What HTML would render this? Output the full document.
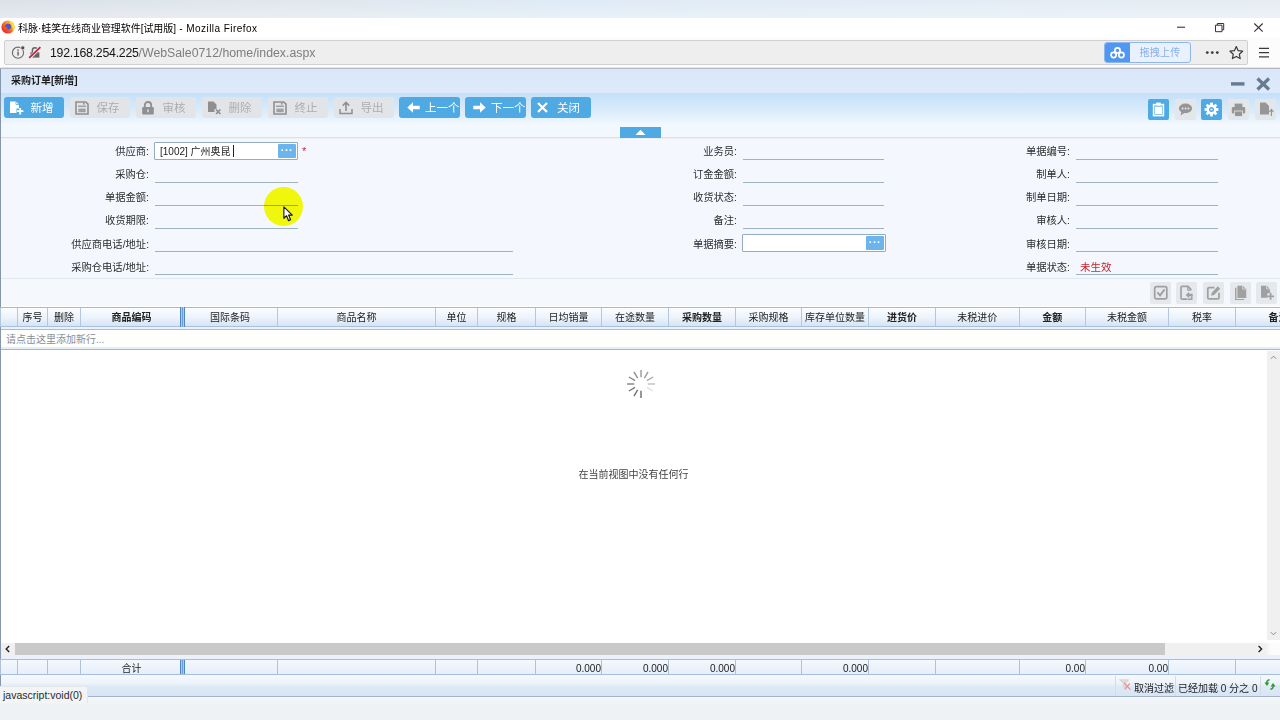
<!DOCTYPE html>
<html lang="zh-CN">
<head>
<meta charset="utf-8">
<title>科脉·蛙笑在线商业管理软件[试用版]</title>
<style>
*{box-sizing:border-box;margin:0;padding:0}
html,body{width:1280px;height:720px;overflow:hidden;background:#eef0f3}
body{position:relative;font-family:"Liberation Sans","Noto Sans CJK SC",sans-serif;font-size:10px;color:#222}
.abs{position:absolute}
svg{position:absolute;overflow:visible}
#topband{left:0;top:0;width:1280px;height:18px;background:linear-gradient(rgba(255,255,255,0),rgba(255,255,255,.3)),linear-gradient(90deg,#dbe1e9 0%,#e0e7ed 22%,#deeaf5 42%,#e2ecf6 70%,#e5ecf4 100%)}
#titlebar{left:0;top:18px;width:1280px;height:20px;background:#fff}
#titletext{left:18px;top:22px;font-size:10px;letter-spacing:-.05px;line-height:14px;color:#000;white-space:nowrap}
#navbar{left:0;top:38px;width:1280px;height:31px;background:#fcfcfc;border-bottom:1px solid #b4bac3;box-shadow:inset 0 -1px 0 #e3e5e8}
#urlbox{left:4px;top:40px;width:1244px;height:25px;background:#eeeeef;border:1px solid #d0d0d2;border-radius:2px}
#urltext{left:50px;top:46px;font-size:12.3px;line-height:15px;color:#7d7d7d;white-space:nowrap}
#urltext b{font-weight:normal;color:#151515;letter-spacing:-.25px}
#upl{left:1104px;top:42px;width:87px;height:21px;border:1px solid #8db6ec;border-radius:3px;background:#e8f1fd;overflow:hidden}
#upl i{position:absolute;left:0;top:0;width:25px;height:21px;background:#4f97f1}
#upl span{position:absolute;left:25px;top:0;width:60px;text-align:center;font-size:10px;line-height:19px;color:#86aee9;letter-spacing:.3px}
#apphead{left:0;top:69px;width:1280px;height:24px;background:linear-gradient(#d9e7f9,#deeafa)}
#apptitle{left:11px;top:74px;font-size:10px;font-weight:bold;line-height:14px;color:#1c1c1c;white-space:nowrap}
#toolbar{left:0;top:93px;width:1280px;height:30px;background:linear-gradient(#c4e0f9 0%,#d8eafb 55%,#eef6fe 100%)}
#subbar{left:0;top:123px;width:1280px;height:15px;background:#f3f8fe;border-bottom:1px solid #d9e2ec}
#leftedge{left:0;top:69px;width:1px;height:617px;background:#8797ab}
.btn{position:absolute;top:97px;height:21px;width:60px;border-radius:3px;font-size:11.5px;line-height:21px;white-space:nowrap}
.btn.blue{background:#4fa9e3;color:#fff}
.btn.gray{background:#e2e5e8;color:#adadad}
.btn span{position:absolute;left:26.5px;top:1px}
.ib{position:absolute;width:21px;height:21px;border-radius:2px}
.ib.blue{background:#4fa9e3}
.ib.gray{background:#e4e7ea}
#tab{left:620px;top:127px;width:41px;height:11px;background:#4fa9e3}
#form{left:1px;top:139px;width:1279px;height:140px;background:#f4f8fe;border-bottom:1px solid #e1e7ef}
#strip{left:1px;top:279px;width:1279px;height:28px;background:#f5f9fe}
.lbl{position:absolute;width:140px;text-align:right;font-size:10.3px;margin-top:1px;line-height:14px;color:#2c2c2c;white-space:nowrap}
.ul{position:absolute;height:1px;background:#9fb2c0}
.box{position:absolute;height:18px;width:144px;background:#fff;border:1px solid #94abc6;border-radius:1px}
.box i{position:absolute;right:1px;top:1px;width:18px;height:14px;background:#6bb5ec;border-radius:1px}
.box i:before{content:"···";position:absolute;left:0;top:0;width:18px;text-align:center;color:#fff;font-style:normal;font-weight:bold;font-size:11px;line-height:13px;letter-spacing:.5px}
.box span{position:absolute;left:5px;top:2px;font-size:10px;line-height:14px;color:#222;white-space:nowrap}
#grid{left:1px;top:306px;width:1279px;height:354px;background:#fff}
#ghead{left:0;top:307px;width:1280px;height:20px;border-top:1px solid #a7b8cd;border-bottom:1px solid #a9c0dc;background:linear-gradient(#fbfdff 0%,#eef4fb 50%,#d6e4f5 100%);overflow:hidden}
.hc{position:absolute;top:0;height:19px;border-left:1px solid #b3c8e0;text-align:center;font-size:10px;line-height:20px;color:#222;white-space:nowrap;overflow:hidden}
.hc.b{font-weight:bold}
#gband{left:1px;top:327px;width:1279px;height:3px;background:#e9f1fa;border-bottom:1px solid #a6bdd8}
#addrow{left:1px;top:330px;width:1279px;height:20px;background:#fefefd;border-bottom:1px solid #a3b8d0;box-shadow:inset 0 -2px 1px #e4eef9}
#addrow span{position:absolute;left:5px;top:3px;font-size:10px;line-height:14px;color:#8a8f96}
.split{left:180px;width:5px;background:#6f9fd6;border-left:1px solid #4f86c6;border-right:1px solid #4f86c6;box-shadow:inset 1px 0 0 #a9c8ec, inset -1px 0 0 #a9c8ec}
#gfoot{left:0;top:659px;width:1280px;height:16px;border-top:1px solid #a4bfdd;border-bottom:1px solid #a4bfdd;background:linear-gradient(#f4f8fd,#e6eef9);overflow:hidden}
.fc{position:absolute;top:0;height:14px;border-left:1px solid #afc1d6;font-size:10px;line-height:17px;color:#222;white-space:nowrap;overflow:hidden}
#hscroll{left:1px;top:643px;width:1266px;height:12px;background:#f0f0f0}
#hthumb{left:15px;top:643px;width:1150px;height:12px;background:#c9c9c9}
#vscroll{left:1267px;top:351px;width:13px;height:289px;background:#f0f0f0}
#corner{left:1265px;top:643px;width:15px;height:12px;background:linear-gradient(90deg,#f0f0f0,#fcfcfc 40%)}
#gap{left:1px;top:655px;width:1279px;height:4px;background:#eaf1fa}
#pager{left:1px;top:675px;width:1279px;height:22px;background:linear-gradient(#f6f9fd 0%,#eef4fb 38%,#dee9f6 55%,#dae5f4 100%);border-bottom:1px solid #9fb3ca}
#below{left:0;top:697px;width:1280px;height:23px;background:linear-gradient(#f4f7fa,#eff2f5 40%,#eff2f5)}
#status{left:0;top:686px;width:88px;height:17px;background:#f3f4f6;border-top:1px solid #e4e6ea;border-right:1px solid #e4e6ea;font-size:10.5px;line-height:16px;color:#2a2a2a;padding-left:3px;white-space:nowrap}
.pt{position:absolute;top:681.5px;font-size:10px;line-height:14px;color:#222;white-space:nowrap}
.psep{position:absolute;top:676px;width:1px;height:20px;background:#d3dce8}
#empty{left:578.5px;top:468px;font-size:10px;line-height:14px;color:#444;white-space:nowrap}
</style>
</head>
<body>
<div id="topband" class="abs"></div>
<div id="titlebar" class="abs"></div>
<svg style="left:1px;top:20px" width="14" height="14" viewBox="0 0 14 14">
  <defs><linearGradient id="ffg" x1="1" y1="0" x2="0" y2="1"><stop offset="0" stop-color="#ffd62a"/><stop offset=".35" stop-color="#ff9a1f"/><stop offset=".7" stop-color="#f2402a"/><stop offset="1" stop-color="#d8204a"/></linearGradient></defs>
  <circle cx="7" cy="7" r="6.6" fill="url(#ffg)"/>
  <path d="M7.6 0.6 C10.8 1 13.4 3.6 13.5 7 C13.5 9 12.6 10.6 11.4 11.8 C12.2 9.6 11.8 6.4 10.2 4.6 C9.4 3.4 8.6 2 7.6 0.6Z" fill="#ffe03a"/>
  <circle cx="7.1" cy="6.6" r="2.9" fill="#2b5fd0"/>
  <path d="M5 4.8 C6.2 3.6 8.6 3.8 9.6 5.4 C8.4 5 7.6 5.4 7.4 6.4 C6.2 6.6 5.4 5.8 5 4.8Z" fill="#7a3fd0"/>
  <path d="M2.6 5.4 C3.6 7.4 5.4 7.8 6.8 7.2 C6.6 8.8 5 9.8 3.4 8.8 C2.6 7.8 2.4 6.4 2.6 5.4Z" fill="#f5621f"/>
</svg>
<div id="titletext" class="abs">科脉·蛙笑在线商业管理软件[试用版]<span style="letter-spacing:.45px"> - Mozilla Firefox</span></div>
<svg style="left:1170px;top:19px" width="100" height="18" viewBox="0 0 100 18">
  <path d="M7 8.2 H15" stroke="#333" stroke-width="1.1" fill="none"/>
  <path d="M45.5 6.2 H52 V12.7 H45.5 Z M47.3 6.2 V4.5 H53.7 V10.8 H52" stroke="#333" stroke-width="1" fill="none"/>
  <path d="M84.3 4.5 L92.7 12.7 M92.7 4.5 L84.3 12.7" stroke="#333" stroke-width="1.1" fill="none"/>
</svg>
<div id="navbar" class="abs"></div>
<div id="urlbox" class="abs"></div>
<svg style="left:10px;top:44px" width="34" height="18" viewBox="0 0 34 18">
  <circle cx="8" cy="8.7" r="5.6" fill="none" stroke="#6b6b6b" stroke-width="1.1"/>
  <rect x="7.4" y="7.6" width="1.3" height="4" fill="#555"/>
  <rect x="7.4" y="5.4" width="1.3" height="1.4" fill="#555"/>
  <circle cx="12.8" cy="3.9" r="2.1" fill="#4e4e4e" stroke="#eeeeef" stroke-width="0.9"/>
  <path d="M20.4 13.6 V8.4 H29.4 V13.6 Z" fill="#666"/>
  <path d="M22.4 9 V6.2 A2.5 2.5 0 0 1 27.4 6.2 V9" fill="none" stroke="#666" stroke-width="1.5"/>
  <path d="M19 14.5 L30.5 3" stroke="#eeeeef" stroke-width="3.2" fill="none"/><path d="M19.2 13.9 L30.4 3.1" stroke="#c81e45" stroke-width="1.8" fill="none"/>
</svg>
<div id="urltext" class="abs"><b>192.168.254.225</b>/WebSale0712/home/index.aspx</div>
<div id="upl" class="abs"><i></i><span>拖拽上传</span>
  <svg style="left:4px;top:3px" width="17" height="14" viewBox="0 0 17 14">
    <circle cx="8.5" cy="4.4" r="2.6" fill="none" stroke="#fff" stroke-width="1.7"/>
    <circle cx="4.6" cy="9" r="2.6" fill="none" stroke="#fff" stroke-width="1.7"/>
    <circle cx="12.4" cy="9" r="2.6" fill="none" stroke="#fff" stroke-width="1.7"/>
  </svg>
</div>
<svg style="left:1200px;top:44px" width="76" height="18" viewBox="0 0 76 18">
  <circle cx="7.3" cy="8.6" r="1.4" fill="#3c3c3c"/><circle cx="12.3" cy="8.6" r="1.4" fill="#3c3c3c"/><circle cx="17.3" cy="8.6" r="1.4" fill="#3c3c3c"/>
  <path d="M36.3 2.6 L38.2 6.7 L42.6 7.2 L39.3 10.2 L40.2 14.6 L36.3 12.4 L32.4 14.6 L33.3 10.2 L30 7.2 L34.4 6.7 Z" fill="none" stroke="#3a3a3a" stroke-width="1.2" stroke-linejoin="round"/>
  <path d="M59 4.3 H69 M59 8.6 H69 M59 12.9 H69" stroke="#3a3a3a" stroke-width="1.3" fill="none"/>
</svg>
<div id="apphead" class="abs"></div>
<div id="apptitle" class="abs">采购订单[新增]</div>
<svg style="left:1228px;top:75px" width="46" height="18" viewBox="0 0 46 18">
  <rect x="3" y="7.2" width="13.5" height="3.4" fill="#667a90"/>
  <path d="M29.5 3.5 L41 14.5 M41 3.5 L29.5 14.5" stroke="#667a90" stroke-width="3.2" fill="none"/>
</svg>
<div id="toolbar" class="abs"></div>
<div id="subbar" class="abs"></div>
<div id="tab" class="abs"><svg style="left:15px;top:2px" width="11" height="7" viewBox="0 0 11 7"><path d="M0.5 6 L5.5 0.8 L10.5 6 Z" fill="#fff"/></svg></div>

<div class="btn blue" style="left:4px"><svg style="left:5px;top:4px" width="16" height="14" viewBox="0 0 16 14"><path d="M1 0.5 H7 L10 3.5 V7.5 H7.5 V12 H1 Z" fill="#fff"/><path d="M7 0.5 V3.5 H10" fill="none" stroke="#4fa9e3" stroke-width="0.8"/><path d="M11.2 7 V13.4 M8 10.2 H14.4" stroke="#fff" stroke-width="1.8" fill="none"/></svg><span>新增</span></div>
<div class="btn gray" style="left:70px"><svg style="left:4.5px;top:4px" width="14" height="14" viewBox="0 0 14 14"><path d="M1 1 H10.8 L13 3.2 V13 H1 Z" fill="none" stroke="#8f8f8f" stroke-width="1.6"/><rect x="3.4" y="7.6" width="7.2" height="3.6" fill="#a0a0a0"/><rect x="3" y="4.6" width="8" height="1.2" fill="#8f8f8f"/><rect x="8" y="2" width="1.6" height="1.6" fill="#8f8f8f"/></svg><span>保存</span></div>
<div class="btn gray" style="left:136px"><svg style="left:4.5px;top:4px" width="14" height="14" viewBox="0 0 14 14"><rect x="1.2" y="6" width="11.6" height="7.4" rx="1" fill="#8f8f8f"/><path d="M3.8 6.4 V4.2 A3.2 3.2 0 0 1 10.2 4.2 V6.4" fill="none" stroke="#8f8f8f" stroke-width="1.8"/><rect x="6.3" y="8.4" width="1.4" height="2.8" fill="#e2e5e8"/></svg><span>审核</span></div>
<div class="btn gray" style="left:202px"><svg style="left:5px;top:4px" width="16" height="14" viewBox="0 0 16 14"><path d="M1 0.5 H6.5 L9.5 3.5 V8 H7.5 V11 H1 Z" fill="#8f8f8f"/><path d="M9 8.5 L13.4 13 M13.4 8.5 L9 13" stroke="#8f8f8f" stroke-width="1.7" fill="none"/></svg><span>删除</span></div>
<div class="btn gray" style="left:268px"><svg style="left:4.5px;top:4px" width="14" height="14" viewBox="0 0 14 14"><path d="M1 1 H10.8 L13 3.2 V13 H1 Z" fill="none" stroke="#8f8f8f" stroke-width="1.6"/><rect x="3.4" y="7.6" width="7.2" height="3.6" fill="#a0a0a0"/><rect x="3" y="4.6" width="8" height="1.2" fill="#8f8f8f"/><rect x="8" y="2" width="1.6" height="1.6" fill="#8f8f8f"/></svg><span>终止</span></div>
<div class="btn gray" style="left:334px"><svg style="left:4.5px;top:4px" width="14" height="14" viewBox="0 0 14 14"><path d="M1 8 V12.6 H13 V8" fill="none" stroke="#8f8f8f" stroke-width="1.5"/><path d="M7 10 V1.5 M3.8 4.6 L7 1.3 L10.2 4.6" fill="none" stroke="#8f8f8f" stroke-width="1.6"/></svg><span>导出</span></div>
<div class="btn blue" style="left:399px;width:61px"><svg style="left:8px;top:5px" width="13" height="11" viewBox="0 0 13 11"><path d="M0.3 5.5 L6 0.3 V3.7 H12.7 V7.3 H6 V10.7 Z" fill="#fff"/></svg><span style="left:26px">上一个</span></div>
<div class="btn blue" style="left:465px;width:61px"><svg style="left:8px;top:5px" width="13" height="11" viewBox="0 0 13 11"><path d="M12.7 5.5 L7 0.3 V3.7 H0.3 V7.3 H7 V10.7 Z" fill="#fff"/></svg><span style="left:26px">下一个</span></div>
<div class="btn blue" style="left:531px;width:60px"><svg style="left:6px;top:5px" width="11" height="11" viewBox="0 0 11 11"><path d="M1 1 L10 10 M10 1 L1 10" stroke="#fff" stroke-width="2.2" fill="none"/></svg><span style="left:26px">关闭</span></div>

<div class="ib blue" style="left:1148px;top:99px"><svg style="left:4px;top:3px" width="13" height="15" viewBox="0 0 13 15"><rect x="1.6" y="2.6" width="9.8" height="11" fill="none" stroke="#fff" stroke-width="1.6"/><rect x="4.2" y="0.6" width="4.6" height="3" fill="#fff"/><rect x="3" y="4.6" width="7" height="7.6" fill="#fff"/></svg></div>
<div class="ib gray" style="left:1175px;top:99px"><svg style="left:3px;top:4px" width="15" height="13" viewBox="0 0 15 13"><ellipse cx="7.5" cy="5.4" rx="6.6" ry="4.8" fill="#969696"/><path d="M3.4 8.6 L2.6 12.4 L7 9.6 Z" fill="#969696"/><circle cx="4.6" cy="5.4" r="1" fill="#e4e7ea"/><circle cx="7.5" cy="5.4" r="1" fill="#e4e7ea"/><circle cx="10.4" cy="5.4" r="1" fill="#e4e7ea"/></svg></div>
<div class="ib blue" style="left:1201px;top:99px"><svg style="left:3px;top:3px" width="15" height="15" viewBox="0 0 15 15"><g fill="#fff"><circle cx="7.5" cy="7.5" r="4.9"/><g id="teeth"><rect x="6.1" y="0.6" width="2.8" height="3"/><rect x="6.1" y="11.4" width="2.8" height="3"/><rect x="0.6" y="6.1" width="3" height="2.8"/><rect x="11.4" y="6.1" width="3" height="2.8"/></g><g transform="rotate(45 7.5 7.5)"><rect x="6.1" y="0.6" width="2.8" height="3"/><rect x="6.1" y="11.4" width="2.8" height="3"/><rect x="0.6" y="6.1" width="3" height="2.8"/><rect x="11.4" y="6.1" width="3" height="2.8"/></g></g><circle cx="7.5" cy="7.5" r="2.5" fill="#4fa9e3"/><circle cx="7.5" cy="7.5" r="1.1" fill="#fff"/></svg></div>
<div class="ib gray" style="left:1228px;top:99px"><svg style="left:3px;top:4px" width="15" height="14" viewBox="0 0 15 14"><rect x="0.8" y="4" width="13.4" height="6.4" rx="1" fill="#969696"/><rect x="3.6" y="0.6" width="7.8" height="3.6" fill="#969696"/><rect x="3.6" y="8" width="7.8" height="5.4" fill="#969696" stroke="#e4e7ea" stroke-width="0.8"/></svg></div>
<div class="ib gray" style="left:1255px;top:99px"><svg style="left:4px;top:3px" width="15" height="15" viewBox="0 0 15 15"><path d="M1 0.6 H6.6 L10 4 V12.6 H1 Z" fill="#969696"/><path d="M12.4 14 V7.6 M10.4 9.8 L12.4 7.4 L14.4 9.8" stroke="#969696" stroke-width="1.2" fill="none"/></svg></div>

<div id="form" class="abs"></div>
<div id="strip" class="abs"></div>
<div id="leftedge" class="abs"></div>
<div class="lbl" style="left:9px;top:144px">供应商:</div>
<div class="lbl" style="left:9px;top:167px">采购仓:</div>
<div class="ul" style="left:155px;width:143px;top:182px"></div>
<div class="lbl" style="left:9px;top:190px">单据金额:</div>
<div class="ul" style="left:155px;width:143px;top:205px"></div>
<div class="lbl" style="left:9px;top:213.3px">收货期限:</div>
<div class="ul" style="left:155px;width:143px;top:228px"></div>
<div class="lbl" style="left:9px;top:236.5px">供应商电话/地址:</div>
<div class="ul" style="left:155px;width:358px;top:251px"></div>
<div class="lbl" style="left:9px;top:259.8px">采购仓电话/地址:</div>
<div class="ul" style="left:155px;width:358px;top:274px"></div>
<div class="lbl" style="left:597px;top:144px">业务员:</div>
<div class="ul" style="left:743px;width:141px;top:159px"></div>
<div class="lbl" style="left:597px;top:167px">订金金额:</div>
<div class="ul" style="left:743px;width:141px;top:182px"></div>
<div class="lbl" style="left:597px;top:190px">收货状态:</div>
<div class="ul" style="left:743px;width:141px;top:205px"></div>
<div class="lbl" style="left:597px;top:213.3px">备注:</div>
<div class="ul" style="left:743px;width:141px;top:228px"></div>
<div class="lbl" style="left:597px;top:236.5px">单据摘要:</div>
<div class="lbl" style="left:930px;top:144px">单据编号:</div>
<div class="ul" style="left:1076px;width:142px;top:159px"></div>
<div class="lbl" style="left:930px;top:167px">制单人:</div>
<div class="ul" style="left:1076px;width:142px;top:182px"></div>
<div class="lbl" style="left:930px;top:190px">制单日期:</div>
<div class="ul" style="left:1076px;width:142px;top:205px"></div>
<div class="lbl" style="left:930px;top:213.3px">审核人:</div>
<div class="ul" style="left:1076px;width:142px;top:228px"></div>
<div class="lbl" style="left:930px;top:236.5px">审核日期:</div>
<div class="ul" style="left:1076px;width:142px;top:251px"></div>
<div class="lbl" style="left:930px;top:259.8px">单据状态:</div>
<div class="ul" style="left:1076px;width:142px;top:274px"></div>
<div class="box" style="left:154px;top:142px"><span>[1002] 广州奥昆</span><i></i><b style="position:absolute;left:78px;top:2px;width:1px;height:12px;background:#222"></b></div>
<div class="abs" style="left:302px;top:145px;color:#d9232b;font-size:11px;line-height:12px">*</div>
<div class="box" style="left:742px;top:234px"><i></i></div>
<div class="abs" style="left:1080px;top:260px;font-size:10.5px;line-height:14px;color:#c7222a;white-space:nowrap">未生效</div>
<div class="abs" style="left:264px;top:187px;width:39px;height:39px;border-radius:50%;background:#fbfd0c;mix-blend-mode:multiply"></div>
<svg style="left:282.5px;top:205.5px" width="11" height="16" viewBox="0 0 13 19"><path d="M1 1 V14.6 L4.2 11.6 L6.6 17.4 L9 16.4 L6.6 10.8 H11 Z" fill="#fff" stroke="#1a1a1a" stroke-width="1.4" stroke-linejoin="round"/></svg>
<div class="ib gray" style="left:1150px;top:282px;height:22px;background:#e5e8ec"><svg style="left:2px;top:1.5px" width="17.5" height="17.5" viewBox="0 0 15 15"><rect x="2.3" y="2.3" width="10.4" height="10.4" rx="1.5" fill="none" stroke="#a0a0a0" stroke-width="1.5"/><path d="M4.6 7.2 L6.9 9.8 L10.8 4.6" fill="none" stroke="#a0a0a0" stroke-width="1.6"/></svg></div>
<div class="ib gray" style="left:1176px;top:282px;height:22px;background:#e5e8ec"><svg style="left:2px;top:1.5px" width="17.5" height="17.5" viewBox="0 0 15 15"><path d="M11.4 5 L8.6 2 H3.6 Q2.6 2 2.6 3 V12 Q2.6 13 3.6 13 H8" fill="none" stroke="#a0a0a0" stroke-width="1.4"/><path d="M8.4 2 V5.2 H11.4" fill="none" stroke="#a0a0a0" stroke-width="1"/><path d="M6.6 9.4 L9.6 6.6 V8.4 H12.6 V10.4 H9.6 V12.2 Z" fill="#a0a0a0"/><path d="M11.8 10.6 V13 H8.4" fill="none" stroke="#a0a0a0" stroke-width="1.3"/></svg></div>
<div class="ib gray" style="left:1203px;top:282px;height:22px;background:#e5e8ec"><svg style="left:2px;top:1.5px" width="17.5" height="17.5" viewBox="0 0 15 15"><path d="M12 7.6 V11.6 Q12 12.8 10.8 12.8 H3.6 Q2.4 12.8 2.4 11.6 V4.2 Q2.4 3 3.6 3 H8" fill="none" stroke="#a0a0a0" stroke-width="1.5"/><path d="M5.2 10 L5.8 7.4 L11 2 L13 4 L7.8 9.4 Z" fill="#a0a0a0"/></svg></div>
<div class="ib gray" style="left:1230px;top:282px;height:22px;background:#e5e8ec"><svg style="left:2px;top:1.5px" width="17.5" height="17.5" viewBox="0 0 15 15"><path d="M2.6 3.2 H3.8 V12.8 H10.4 V13.8 H2.6 Z" fill="#a0a0a0"/><path d="M4.6 1.4 H9.2 L12.2 4.4 V12 H4.6 Z" fill="#a0a0a0"/><path d="M9.2 1.4 V4.4 H12.2" fill="none" stroke="#e5e8ec" stroke-width="0.6"/></svg></div>
<div class="ib gray" style="left:1256px;top:282px;height:22px;background:#e5e8ec"><svg style="left:2px;top:1.5px" width="17.5" height="17.5" viewBox="0 0 15 15"><path d="M2.6 1.4 H7.4 L10.2 4.2 V8 H8 V11.8 H2.6 Z" fill="#a0a0a0"/><path d="M7.4 1.4 V4.2 H10.2" fill="none" stroke="#e5e8ec" stroke-width="0.6"/><path d="M10.8 7.6 V13.4 M7.9 10.5 H13.7" stroke="#a0a0a0" stroke-width="1.5" fill="none"/></svg></div>
<div id="grid" class="abs"></div>
<div id="ghead" class="abs">
<div class="hc" style="left:0px;width:17px"></div>
<div class="hc" style="left:17px;width:30px">序号</div>
<div class="hc" style="left:47px;width:33px">删除</div>
<div class="hc b" style="left:80px;width:102px">商品编码</div>
<div class="hc" style="left:182px;width:95px">国际条码</div>
<div class="hc" style="left:277px;width:158px">商品名称</div>
<div class="hc" style="left:435px;width:42px">单位</div>
<div class="hc" style="left:477px;width:58px">规格</div>
<div class="hc" style="left:535px;width:66px">日均销量</div>
<div class="hc" style="left:601px;width:67px">在途数量</div>
<div class="hc b" style="left:668px;width:67px">采购数量</div>
<div class="hc" style="left:735px;width:66px">采购规格</div>
<div class="hc" style="left:801px;width:67px">库存单位数量</div>
<div class="hc b" style="left:868px;width:67px">进货价</div>
<div class="hc" style="left:935px;width:83.5px">未税进价</div>
<div class="hc b" style="left:1018.5px;width:66.5px">金额</div>
<div class="hc" style="left:1085px;width:83px">未税金额</div>
<div class="hc" style="left:1168px;width:67px">税率</div>
<div class="hc b" style="left:1235px;width:86px">备注</div>
</div>
<div class="abs split" style="top:307px;height:20px"></div>
<div id="gfoot" class="abs">
<div class="fc" style="left:0px;width:17px;text-align:right"></div>
<div class="fc" style="left:17px;width:30px;text-align:right"></div>
<div class="fc" style="left:47px;width:33px;text-align:right"></div>
<div class="fc" style="left:80px;width:102px;text-align:center">合计</div>
<div class="fc" style="left:182px;width:95px;text-align:right"></div>
<div class="fc" style="left:277px;width:158px;text-align:right"></div>
<div class="fc" style="left:435px;width:42px;text-align:right"></div>
<div class="fc" style="left:477px;width:58px;text-align:right"></div>
<div class="fc" style="left:535px;width:66px;text-align:right">0.000</div>
<div class="fc" style="left:601px;width:67px;text-align:right">0.000</div>
<div class="fc" style="left:668px;width:67px;text-align:right">0.000</div>
<div class="fc" style="left:735px;width:66px;text-align:right"></div>
<div class="fc" style="left:801px;width:67px;text-align:right">0.000</div>
<div class="fc" style="left:868px;width:67px;text-align:right"></div>
<div class="fc" style="left:935px;width:83.5px;text-align:right"></div>
<div class="fc" style="left:1018.5px;width:66.5px;text-align:right">0.00</div>
<div class="fc" style="left:1085px;width:83px;text-align:right">0.00</div>
<div class="fc" style="left:1168px;width:67px;text-align:right"></div>
<div class="fc" style="left:1235px;width:86px;text-align:right"></div>
</div>
<div class="abs split" style="top:660px;height:14px"></div>
<div id="gband" class="abs"></div>
<div id="addrow" class="abs"><span>请点击这里添加新行...</span></div>
<div id="vscroll" class="abs"><svg style="left:3px;top:3.5px" width="7" height="5" viewBox="0 0 8 6"><path d="M0.8 4.6 L4 1.4 L7.2 4.6" fill="none" stroke="#8c8c8c" stroke-width="1.2"/></svg><svg style="left:3px;top:279.5px" width="7" height="5" viewBox="0 0 8 6"><path d="M0.8 1.4 L4 4.6 L7.2 1.4" fill="none" stroke="#8c8c8c" stroke-width="1.2"/></svg></div>
<svg style="left:624px;top:367px" width="34" height="34" viewBox="-17 -17 34 34" id="spin"><line x1="0.00" y1="-6.80" x2="0.00" y2="-14.00" stroke="#6a6a6a" stroke-width="1.4" stroke-opacity="0.70"/><line x1="3.40" y1="-5.89" x2="7.00" y2="-12.12" stroke="#6a6a6a" stroke-width="1.4" stroke-opacity="0.65"/><line x1="5.89" y1="-3.40" x2="12.12" y2="-7.00" stroke="#6a6a6a" stroke-width="1.4" stroke-opacity="0.58"/><line x1="6.80" y1="-0.00" x2="14.00" y2="-0.00" stroke="#6a6a6a" stroke-width="1.4" stroke-opacity="0.42"/><line x1="5.89" y1="3.40" x2="12.12" y2="7.00" stroke="#6a6a6a" stroke-width="1.4" stroke-opacity="0.20"/><line x1="3.40" y1="5.89" x2="7.00" y2="12.12" stroke="#6a6a6a" stroke-width="1.4" stroke-opacity="0.04"/><line x1="0.00" y1="6.80" x2="0.00" y2="14.00" stroke="#6a6a6a" stroke-width="1.4" stroke-opacity="1.00"/><line x1="-3.40" y1="5.89" x2="-7.00" y2="12.12" stroke="#6a6a6a" stroke-width="1.4" stroke-opacity="0.95"/><line x1="-5.89" y1="3.40" x2="-12.12" y2="7.00" stroke="#6a6a6a" stroke-width="1.4" stroke-opacity="0.90"/><line x1="-6.80" y1="0.00" x2="-14.00" y2="0.00" stroke="#6a6a6a" stroke-width="1.4" stroke-opacity="0.85"/><line x1="-5.89" y1="-3.40" x2="-12.12" y2="-7.00" stroke="#6a6a6a" stroke-width="1.4" stroke-opacity="0.80"/><line x1="-3.40" y1="-5.89" x2="-7.00" y2="-12.12" stroke="#6a6a6a" stroke-width="1.4" stroke-opacity="0.75"/></svg>
<div id="empty" class="abs">在当前视图中没有任何行</div>
<div id="hscroll" class="abs"></div>
<div id="hthumb" class="abs"></div>
<div id="corner" class="abs"></div>
<div id="gap" class="abs"></div>
<svg style="left:4px;top:644px" width="8" height="10" viewBox="0 0 8 10"><path d="M5.2 2 L2.2 5 L5.2 8" fill="none" stroke="#222" stroke-width="1.4"/></svg>
<svg style="left:1255.5px;top:644px" width="8" height="10" viewBox="0 0 8 10"><path d="M2.6 2 L5.6 5 L2.6 8" fill="none" stroke="#222" stroke-width="1.4"/></svg>
<div id="pager" class="abs"></div>
<div id="below" class="abs"></div>
<div class="psep" style="left:1115px"></div>
<svg style="left:1119px;top:679px" width="13" height="12" viewBox="0 0 13 12"><path d="M0.6 0.8 H9.6 L6.4 4.6 V9.4 L4.4 8 V4.6 Z" fill="#e4dedb" stroke="#cfc3bd" stroke-width="0.6"/><path d="M5 3.6 L11.4 10.6 M10.8 4.4 L5.8 10.4" stroke="#ec8f88" stroke-width="1.3" fill="none"/></svg>
<div class="pt" style="left:1134px">取消过滤</div>
<div class="psep" style="left:1175px"></div>
<div class="pt" style="left:1178px">已经加载 0 分之 0</div>
<div class="psep" style="left:1260px"></div>
<svg style="left:1264px;top:679px" width="12" height="11" viewBox="0 0 12 11"><path d="M5.6 0.8 C3.4 1 2.6 2.6 2.8 4.4" fill="none" stroke="#2f9a3a" stroke-width="1.5"/><path d="M0.4 3.6 L3 7 L5.4 3.6 Z" fill="#2f9a3a"/><path d="M6.4 10.2 C8.6 10 9.4 8.4 9.2 6.6" fill="none" stroke="#2f9a3a" stroke-width="1.5"/><path d="M6.6 7.4 L9 4 L11.6 7.4 Z" fill="#2f9a3a"/></svg>
<div id="status" class="abs">javascript:void(0)</div>
</body>
</html>
